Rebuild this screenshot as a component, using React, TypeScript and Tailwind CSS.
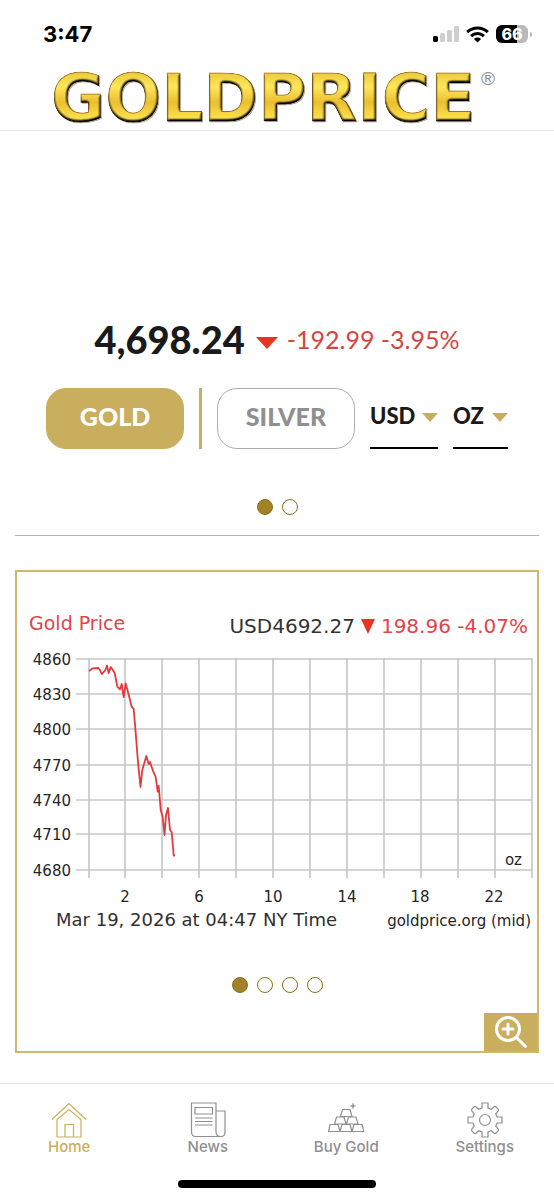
import { useState } from "react";
import type { ReactNode } from "react";

const V_LINES = Array.from({ length: 13 }, (_, i) => Math.round(88.5 + i * 36.92));
const H_LINES = [
  { y: 659, label: "4860" },
  { y: 694, label: "4830" },
  { y: 729, label: "4800" },
  { y: 765, label: "4770" },
  { y: 800, label: "4740" },
  { y: 834, label: "4710" },
  { y: 870, label: "4680" },
];
const HOURS = [
  { x: 125, label: "2" },
  { x: 199, label: "6" },
  { x: 273, label: "10" },
  { x: 347, label: "14" },
  { x: 420, label: "18" },
  { x: 494, label: "22" },
];
const PRICE_LINE =
  "89,671 92.7,668.3 98.3,668 100,670 101.7,674 105,670.7 107,665.5 108.7,673 110.7,667 112.7,670 114.7,673 117.3,686.7 120,689.3 121.7,684 123.7,697 125.7,683.5 128.3,693.3 131.7,706.7 133.7,709 136,736.7 137.8,760 140.5,787 142.3,770 146.3,756 148.7,764 150,762 153.3,771.7 155.7,777 157.7,791.7 158.7,786 160.7,810 162.7,817 164.5,835 166,815 168,808 170,830 171.7,832 173.7,855.5 175,855.5";

function StatusBar() {
  return (
    <div className="flex h-[68px] items-center justify-between pr-[22px] pl-[43px]">
      <span className="text-[22px] leading-6 font-bold text-black">3:47</span>
      <div className="flex items-center gap-[7px]">
        <svg width="26" height="17" viewBox="0 0 26 17" aria-hidden="true">
          <rect x="0" y="10" width="5" height="6" rx="1.5" fill="#000" />
          <rect x="7" y="7" width="5" height="9" rx="1.5" fill="#cfcfcf" />
          <rect x="14" y="4" width="5" height="12" rx="1.5" fill="#cfcfcf" />
          <rect x="21" y="0" width="5" height="16" rx="1.5" fill="#cfcfcf" />
        </svg>
        <svg width="23" height="17" viewBox="0 0 23 17" fill="none" stroke="#000" strokeWidth="3" aria-hidden="true">
          <path d="M1.2 6.2a14.8 14.8 0 0 1 20.6 0" />
          <path d="M5.1 10.1a9.3 9.3 0 0 1 12.8 0" />
          <path d="M7.9 12.9a5.2 5.2 0 0 1 7.2 0L11.5 16.5z" fill="#000" stroke="none" />
        </svg>
        <div className="flex items-center gap-[2px]">
          <span className="flex h-[18px] w-8 items-center justify-center rounded-[6px] bg-linear-to-r from-black from-66% to-[#b9b9b9] to-66% text-base leading-[18px] font-extrabold text-white">
            66
          </span>
          <span className="h-[5px] w-[2px] rounded-r-full bg-[#b9b9b9]" />
        </div>
      </div>
    </div>
  );
}

function Logo() {
  return (
    <svg className="w-[450px] max-w-full overflow-visible" viewBox="0 0 450 62" role="img" aria-label="GoldPrice">
      <defs>
        <linearGradient id="gold" x1="0" y1="0" x2="0" y2="1">
          <stop offset="0.15" stopColor="#e9c93a" />
          <stop offset="0.35" stopColor="#ffe65a" />
          <stop offset="0.55" stopColor="#eabf30" />
          <stop offset="0.75" stopColor="#fbdf4b" />
          <stop offset="1" stopColor="#c2941f" />
        </linearGradient>
        <filter id="bevel" x="-2%" y="-10%" width="104%" height="120%" colorInterpolationFilters="sRGB">
          <feGaussianBlur in="SourceAlpha" stdDeviation="1.8" result="soft" />
          <feDiffuseLighting in="soft" surfaceScale="3.5" diffuseConstant="1.3" lightingColor="#fff" result="light">
            <feDistantLight azimuth="255" elevation="54" />
          </feDiffuseLighting>
          <feComposite in="light" in2="SourceAlpha" operator="in" result="shade" />
          <feComposite in="SourceGraphic" in2="shade" operator="arithmetic" k1="1" k2="0" k3="0" k4="0" result="lit" />
          <feDropShadow in="lit" dx="1" dy="1" stdDeviation="0.6" floodColor="#6a4520" floodOpacity="0.5" />
        </filter>
      </defs>
      <text
        x="-3"
        y="53"
        fontFamily="DejaVu Sans"
        fontWeight="700"
        fontSize="66"
        fill="url(#gold)"
        stroke="#9c7023"
        strokeWidth="1"
        filter="url(#bevel)"
      >
        GOLDPRICE
      </text>
      <text x="427" y="17" fontFamily="Liberation Sans" fontSize="19" fill="#8a8a8a">
        ®
      </text>
    </svg>
  );
}

function Dots({ count, label }: { count: number; label: string }) {
  const [active, setActive] = useState(0);
  return (
    <div className="flex justify-center gap-[9px]">
      {Array.from({ length: count }, (_, i) => (
        <button
          key={i}
          type="button"
          aria-label={`${label} ${i + 1}`}
          aria-pressed={i === active}
          onClick={() => setActive(i)}
          className={`size-4 rounded-full border border-[#8f7014] ${i === active ? "bg-[#a18229]" : "bg-white"}`}
        />
      ))}
    </div>
  );
}

function UnitSelect({ label, options, className }: { label: string; options: string[]; className: string }) {
  return (
    <label className={`relative flex h-[61px] border-b-2 border-black ${className}`}>
      <select
        aria-label={label}
        className="h-[55px] w-full appearance-none bg-transparent font-[Lato] text-[22px] font-black text-[#1a1a1a] outline-none"
      >
        {options.map((o) => (
          <option key={o}>{o}</option>
        ))}
      </select>
      <svg className="pointer-events-none absolute top-[25px] right-0" width="16" height="9" viewBox="0 0 16 9" aria-hidden="true">
        <path d="M0 0h16L8 9z" fill="#c9ae5d" />
      </svg>
    </label>
  );
}

function Chart() {
  return (
    <svg className="block w-full" viewBox="17 650 520 288" fontFamily="DejaVu Sans, sans-serif" role="img" aria-label="Gold price over 24 hours">
      <g stroke="#c4c6c6" strokeWidth="1.6">
        {V_LINES.map((x) => (
          <line key={x} x1={x} x2={x} y1="658" y2="878" />
        ))}
        {H_LINES.map(({ y }) => (
          <line key={y} x1="76" x2="532" y1={y} y2={y} />
        ))}
      </g>
      <polyline points={PRICE_LINE} fill="none" stroke="#e5393c" strokeWidth="1.8" strokeLinejoin="round" />
      <g fontSize="15" fill="#262626">
        {H_LINES.map(({ y, label }) => (
          <text key={y} x="71" y={y + 6} textAnchor="end">
            {label}
          </text>
        ))}
        {HOURS.map(({ x, label }) => (
          <text key={x} x={x} y="902" textAnchor="middle">
            {label}
          </text>
        ))}
        <text x="522" y="865" textAnchor="end">
          oz
        </text>
        <text x="531" y="926" textAnchor="end">
          goldprice.org (mid)
        </text>
      </g>
      <text x="56" y="926" fontSize="18" fill="#303030">
        Mar 19, 2026 at 04:47 NY Time
      </text>
    </svg>
  );
}

function HomeIcon() {
  return (
    <>
      <path d="M1 17.5 18 1.5 35 17.5" />
      <path d="M6 17.5V35h24V17.5L18 7.5 6 17.5z" />
      <path d="M14 35V22.5h8.5V35" />
    </>
  );
}

function NewsIcon() {
  return (
    <>
      <path d="M26 28V1H1.500v29q0 4.500 4.500 4.500h25q4 0 4-4.500V9h-9v21q0 4.500 5 4.500" />
      <path d="M5 5.500h17.500v6.500H5zM5 16h17.500M5 19.500h17.500M5 23h17.500" />
    </>
  );
}

function BarsIcon() {
  return (
    <>
      <path d="M14.500 7.500h7.500l2 7H12.500z" />
      <path d="M8.500 15h7.500l2 7H6.500zM20.500 15h7.500l2 7H18.500z" />
      <path d="M2 22.500h8l2 7H.5zM14 22.500h8l2 7H12zM26 22.500h8l2 7H24z" />
      <path d="m25 1 .8 2.200 2.200.8-2.200.8-.8 2.200-.8-2.200-2.200-.8 2.200-.8z" fill="currentColor" strokeWidth="0.300" />
    </>
  );
}

function GearIcon() {
  return (
    <>
      <path d="M15 1h6v5l3.200 1.300 3-2.500q1-.8 2 .2l1.800 1.800q1 1 .2 2l-2.500 3L30 15h5v6h-5l-1.300 3.200 2.500 3q.8 1-.2 2L29.200 31q-1 1-2 .2l-3-2.500L21 30v5h-6v-5l-3.200-1.300-3 2.500q-1 .8-2-.2L5 29.200q-1-1-.2-2l2.500-3L6 21H1v-6h5l1.300-3.200-2.500-3q-.8-1 .2-2L6.800 5q1-1 2-.2l3 2.500L15 6z" />
      <circle cx="18" cy="18" r="5.500" />
    </>
  );
}

const TABS: { label: string; icon: ReactNode }[] = [
  { label: "Home", icon: <HomeIcon /> },
  { label: "News", icon: <NewsIcon /> },
  { label: "Buy Gold", icon: <BarsIcon /> },
  { label: "Settings", icon: <GearIcon /> },
];

function TabBar() {
  return (
    <nav className="border-t border-[#e2e2e2] pt-[18px] pb-3">
      <div className="grid grid-cols-4">
        {TABS.map(({ label, icon }, i) => (
          <a
            key={label}
            href={`#${label.toLowerCase().replace(" ", "-")}`}
            aria-current={i === 0 ? "page" : undefined}
            className={`flex flex-col items-center ${i === 0 ? "text-[#c9ae5d]" : "text-[#8f8f8f]"}`}
          >
            <svg width="36" height="36" viewBox="0 0 36 36" fill="none" stroke="currentColor" strokeWidth="1.2" aria-hidden="true">
              {icon}
            </svg>
            <span className="text-[15px] leading-[18px] font-medium">{label}</span>
          </a>
        ))}
      </div>
      <div className="mx-auto mt-6 h-2 w-[198px] rounded-full bg-black" />
    </nav>
  );
}

export default function App() {
  const [metal, setMetal] = useState("GOLD");
  const metalClass = (name: string) =>
    metal === name ? "border-[#c9ae5d] bg-[#c9ae5d] text-white" : "border-[#acacac] bg-white text-[#8f8f8f]";

  return (
    <div className="flex min-h-screen flex-col bg-white font-[Inter,sans-serif]">
      <header className="border-b border-[#e6e6e6]">
        <StatusBar />
        <div className="flex h-[62px] justify-center pl-1">
          <Logo />
        </div>
      </header>

      <main className="flex flex-1 flex-col px-[15px] pt-[184px]">
        <div className="flex h-12 items-center justify-center font-[Lato]">
          <span className="text-[38px] leading-[48px] font-black text-[#1a1a1a]">4,698.24</span>
          <svg className="mt-2 mr-[9px] ml-[11px]" width="22" height="12" viewBox="0 0 22 12" aria-label="down" role="img">
            <path d="M0 0h22L11 12z" fill="#ea3323" />
          </svg>
          <span className="text-[25px] leading-[48px] text-[#d6463f]">-192.99 -3.95%</span>
        </div>

        <div className="mt-[25px] flex items-stretch justify-center gap-[15px] font-[Lato]">
          <button
            type="button"
            aria-pressed={metal === "GOLD"}
            onClick={() => setMetal("GOLD")}
            className={`h-[61px] w-[138px] rounded-[20px] border pb-1 text-[25px] font-black ${metalClass("GOLD")}`}
          >
            GOLD
          </button>
          <span className="w-[3px] bg-[#c9ae5d]" />
          <button
            type="button"
            aria-pressed={metal === "SILVER"}
            onClick={() => setMetal("SILVER")}
            className={`h-[61px] w-[138px] rounded-[20px] border pb-1 text-[25px] font-black ${metalClass("SILVER")}`}
          >
            SILVER
          </button>
          <UnitSelect label="Currency" options={["USD", "EUR", "GBP"]} className="w-[68px]" />
          <UnitSelect label="Weight" options={["OZ", "G", "KG"]} className="w-[55px]" />
        </div>

        <div className="mt-[50px]">
          <Dots count={2} label="Price slide" />
        </div>
        <hr className="mt-5 border-t border-[#b4b4b4]" />

        <section className="mt-[34px] flex h-[483px] flex-col border-2 border-[#cfb76f] font-[DejaVu_Sans]">
          <div className="flex justify-between pt-[38px] pr-[9px] pl-3 leading-6">
            <h2 className="pt-px text-[19px] text-[#e0454a]">Gold Price</h2>
            <p className="flex items-center gap-[6px] pt-1 text-[20px]">
              <span className="text-[#333]">USD4692.27</span>
              <svg width="14" height="15" viewBox="0 0 14 15" aria-label="down" role="img">
                <path d="M0 0h14L7 15z" fill="#ea3323" />
              </svg>
              <span className="text-[#e0454a]">198.96 -4.07%</span>
            </p>
          </div>
          <div className="mt-3">
            <Chart />
          </div>
          <div className="mt-[39px]">
            <Dots count={4} label="Chart slide" />
          </div>
          <button type="button" aria-label="Zoom in" className="mt-auto flex h-[38px] w-[53px] items-center justify-center self-end bg-[#c9ae5d]">
            <svg width="34" height="34" viewBox="0 0 34 34" fill="none" stroke="#fff" strokeWidth="3" strokeLinecap="round" aria-hidden="true">
              <circle cx="14" cy="14" r="11.500" />
              <path d="m22.500 22.500 9 9M9 14h10M14 9v10" />
            </svg>
          </button>
        </section>
      </main>

      <TabBar />
    </div>
  );
}
